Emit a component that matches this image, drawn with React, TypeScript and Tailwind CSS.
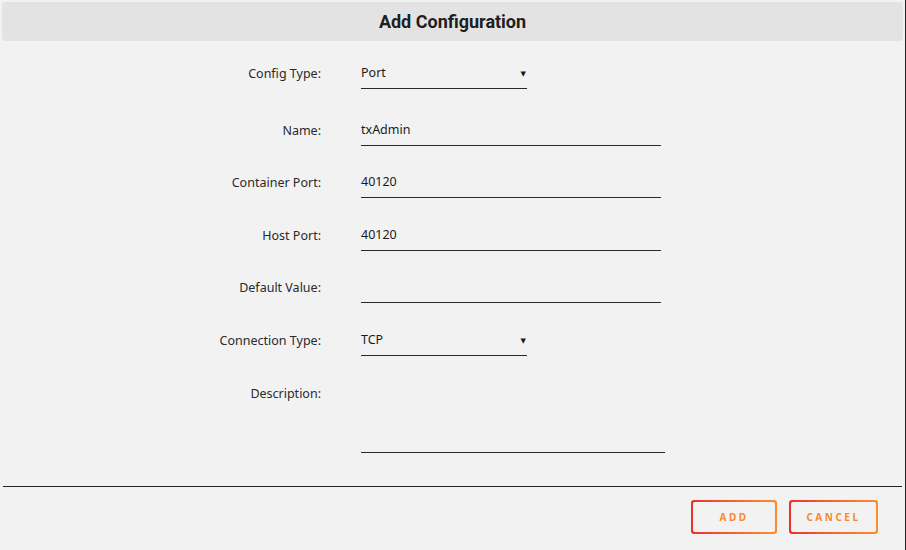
import { ReactNode } from "react";

const FONT = { fontFamily: '"Noto Sans", "DejaVu Sans", sans-serif' };

function Row({ label, children, className = "" }: { label: string; children: ReactNode; className?: string }) {
  return (
    <div className={`grid grid-cols-[321px_1fr] gap-x-[40px] ${className}`}>
      <div className="flex h-[30px] items-center justify-end text-[12.5px] text-[#2a2a2a]">{label}</div>
      <div>{children}</div>
    </div>
  );
}

function TextInput({ value, width = "w-[300px]" }: { value: string; width?: string }) {
  return (
    <div className={`flex h-[30px] ${width} items-center border-b border-[#2a2a2a] text-[12.5px] text-[#1a1a1a]`}>
      {value}
    </div>
  );
}

function Select({ value }: { value: string }) {
  return (
    <div className="flex h-[30px] w-[166px] items-center justify-between border-b border-[#2a2a2a] pr-[1px] text-[12.5px] text-[#1a1a1a]">
      <span>{value}</span>
      <span className="mb-[1px] text-[7px] leading-none">▼</span>
    </div>
  );
}

function GradientButton({ children, width }: { children: ReactNode; width: string }) {
  return (
    <div className={`rounded-[3px] bg-gradient-to-r from-[#e8312e] to-[#ff8c2e] p-[2px] ${width}`}>
      <div className="flex h-[30px] items-center justify-center rounded-[2px] bg-[#f2f2f2] text-[10px] font-bold tracking-[0.25em] text-[#f7892f]">
        {children}
      </div>
    </div>
  );
}

export default function App() {
  return (
    <div className="flex h-[550px] w-[906px] flex-col border-r border-[#222] bg-[#f2f2f2]" style={FONT}>
      {/* Header */}
      <div className="mx-[2px] mt-[2px] flex h-[39px] items-center justify-center rounded-[3px] bg-[#e3e3e3]">
        <h1 className="text-[18px] font-bold text-[#1e1e1e]" style={{ fontFamily: 'Roboto, sans-serif' }}>
          Add Configuration
        </h1>
      </div>

      {/* Form */}
      <div className="mt-[18px] flex flex-col">
        <Row label="Config Type:">
          <Select value="Port" />
        </Row>
        <Row label="Name:" className="mt-[27px]">
          <TextInput value="txAdmin" />
        </Row>
        <Row label="Container Port:" className="mt-[22px]">
          <TextInput value="40120" />
        </Row>
        <Row label="Host Port:" className="mt-[23px]">
          <TextInput value="40120" />
        </Row>
        <Row label="Default Value:" className="mt-[22px]">
          <TextInput value="" />
        </Row>
        <Row label="Connection Type:" className="mt-[23px]">
          <Select value="TCP" />
        </Row>
        <Row label="Description:" className="mt-[23px]">
          <div className="h-[74px] w-[304px] border-b border-[#2a2a2a]" />
        </Row>
      </div>

      {/* Footer */}
      <div className="mx-[3px] mt-[33px] border-t border-[#222]" />
      <div className="flex justify-end gap-[12px] pr-[27px] pt-[13px]">
        <GradientButton width="w-[86px]">ADD</GradientButton>
        <GradientButton width="w-[89px]">CANCEL</GradientButton>
      </div>
    </div>
  );
}
